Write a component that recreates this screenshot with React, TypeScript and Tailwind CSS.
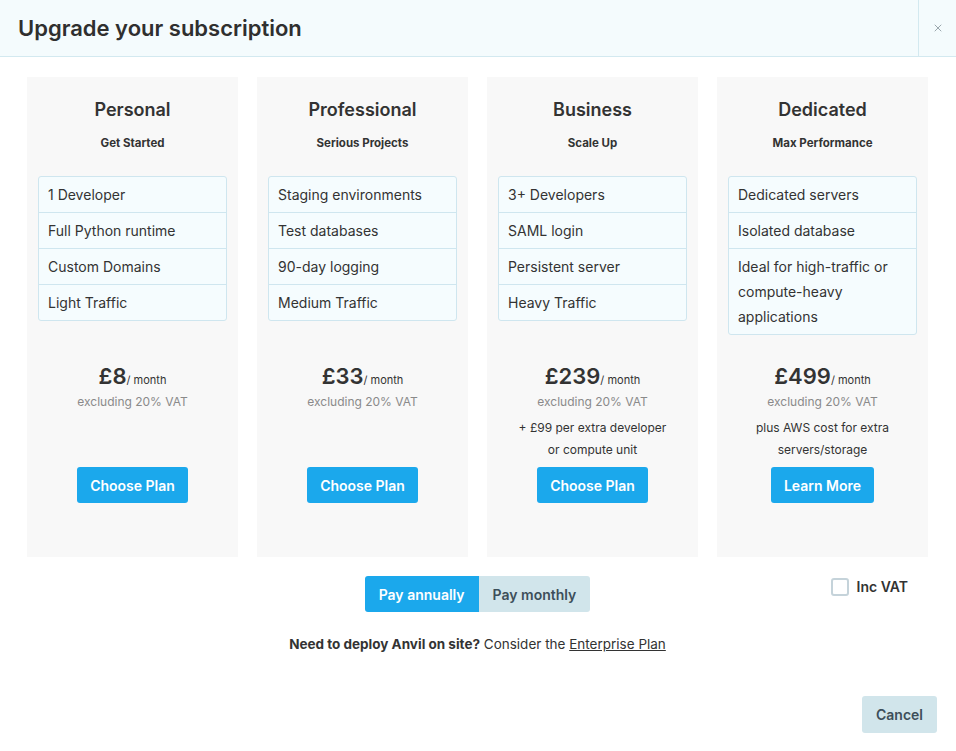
import React, { useState } from 'react';
import { X } from 'lucide-react';

interface Plan {
  name: string;
  tagline: string;
  features: string[];
  price: string;
  notes: string[];
  cta: string;
}

const plans: Plan[] = [
  {
    name: 'Personal',
    tagline: 'Get Started',
    features: ['1 Developer', 'Full Python runtime', 'Custom Domains', 'Light Traffic'],
    price: '£8',
    notes: [],
    cta: 'Choose Plan',
  },
  {
    name: 'Professional',
    tagline: 'Serious Projects',
    features: ['Staging environments', 'Test databases', '90-day logging', 'Medium Traffic'],
    price: '£33',
    notes: [],
    cta: 'Choose Plan',
  },
  {
    name: 'Business',
    tagline: 'Scale Up',
    features: ['3+ Developers', 'SAML login', 'Persistent server', 'Heavy Traffic'],
    price: '£239',
    notes: ['+ £99 per extra developer', 'or compute unit'],
    cta: 'Choose Plan',
  },
  {
    name: 'Dedicated',
    tagline: 'Max Performance',
    features: ['Dedicated servers', 'Isolated database', 'Ideal for high-traffic or compute-heavy applications'],
    price: '£499',
    notes: ['plus AWS cost for extra', 'servers/storage'],
    cta: 'Learn More',
  },
];

export default function App() {
  const [annual, setAnnual] = useState(true);
  const [incVat, setIncVat] = useState(false);

  return (
    <div className="w-[956px] h-[751px] bg-white flex flex-col text-[#333] font-['Inter','Noto_Sans',sans-serif]">
      {/* Header */}
      <div className="h-[57px] shrink-0 flex bg-[#f4fbfd] border-b border-[#d3e9f0]">
        <h1 className="flex-1 flex items-center pl-[18px] text-[22px] font-semibold text-[#2f2f2f]">
          Upgrade your subscription
        </h1>
        <button className="w-[38px] flex items-center justify-center border-l border-[#d3e9f0] text-[#7d8b93]">
          <X className="w-[12px] h-[12px]" strokeWidth={1.5} />
        </button>
      </div>

      {/* Plans */}
      <div className="pl-[27px] pr-[28px] pt-[20px]">
        <div className="grid grid-cols-4 gap-[19px]">
          {plans.map((plan) => (
            <div key={plan.name} className="h-[480px] bg-[#f8f8f8] flex flex-col items-center pt-[21px]">
              <h2 className="text-[18px] leading-[24px] font-semibold">{plan.name}</h2>
              <p className="mt-[13px] text-[11.5px] leading-[16px] font-bold">{plan.tagline}</p>

              <div className="mt-[25px] h-[187px] w-full px-[11px]">
                <ul className="bg-[#f5fcfe] border border-[#cfe6ef] rounded-[3px]">
                  {plan.features.map((f, i) => (
                    <li
                      key={f}
                      className={`px-[9px] py-[5px] text-[14px] leading-[25px] ${i > 0 ? 'border-t border-[#cfe6ef]' : ''}`}
                    >
                      {f}
                    </li>
                  ))}
                </ul>
              </div>

              <div className="h-[26px] flex items-baseline">
                <span className="text-[22px] leading-[26px] font-semibold">{plan.price}</span>
                <span className="text-[11px] leading-[14px]">/ month</span>
              </div>
              <p className="mt-[4px] text-[12px] leading-[18px] text-[#8a8a8a]">excluding 20% VAT</p>

              <div className="h-[56px] pt-[6px] text-center text-[12px] leading-[22px]">
                {plan.notes.map((n) => (
                  <p key={n}>{n}</p>
                ))}
              </div>

              <button className="h-[36px] px-[13px] rounded-[3px] bg-[#1ba8ec] text-white text-[14px] font-semibold">
                {plan.cta}
              </button>
            </div>
          ))}
        </div>

        {/* Billing toggle */}
        <div className="mt-[19px] grid grid-cols-[1fr_auto_1fr] items-start">
          <div />
          <div className="flex rounded-[3px] overflow-hidden text-[14px] font-semibold">
            <button
              onClick={() => setAnnual(true)}
              className={`h-[36px] px-[14px] ${annual ? 'bg-[#1ba8ec] text-white' : 'bg-[#d1e5eb] text-[#3d4f5a]'}`}
            >
              Pay annually
            </button>
            <button
              onClick={() => setAnnual(false)}
              className={`h-[36px] px-[14px] ${!annual ? 'bg-[#1ba8ec] text-white' : 'bg-[#d1e5eb] text-[#3d4f5a]'}`}
            >
              Pay monthly
            </button>
          </div>
          <label className="justify-self-end mr-[20px] flex items-center gap-[8px] text-[14px] font-semibold cursor-pointer">
            <span
              onClick={() => setIncVat(!incVat)}
              className={`w-[18px] h-[18px] rounded-[3px] border-2 border-[#c5d3da] ${incVat ? 'bg-[#1ba8ec]' : 'bg-white'}`}
            />
            Inc VAT
          </label>
        </div>

        <p className="mt-[23px] text-center text-[13.5px] leading-[18px]">
          <span className="font-bold">Need to deploy Anvil on site?</span> Consider the{' '}
          <a className="underline">Enterprise Plan</a>
        </p>
      </div>

      {/* Footer */}
      <div className="mt-auto flex justify-end pr-[19px] pb-[18px]">
        <button className="h-[37px] px-[14px] rounded-[3px] bg-[#d1e5eb] text-[#3d4f5a] text-[14px] font-semibold">
          Cancel
        </button>
      </div>
    </div>
  );
}
